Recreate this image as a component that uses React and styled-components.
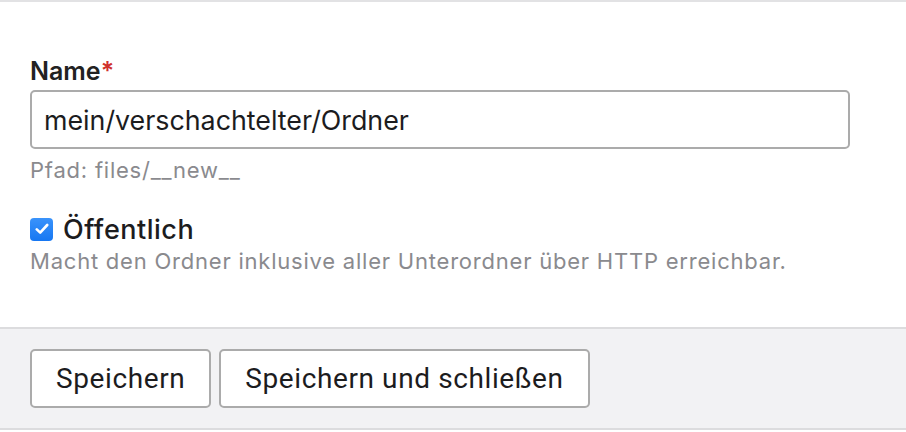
import React, { Component } from 'react';
import styled, { createGlobalStyle } from 'styled-components';

const GlobalStyle = createGlobalStyle`
  html, body {
    margin: 0;
    padding: 0;
    background: #fff;
  }
  body {
    font-family: Inter, "Noto Sans", sans-serif;
    color: #1c1c1e;
  }
`;

class App extends Component {
  state = {
    name: 'mein/verschachtelter/Ordner',
    isPublic: true
  };

  constructor(props) {
    super(props);

    this.handlerInput = this.handlerInput.bind(this);
    this.togglePublic = this.togglePublic.bind(this);
  }

  handlerInput(e) {
    this.setState({ [e.target.name]: e.target.value });
  }

  togglePublic() {
    this.setState({ isPublic: !this.state.isPublic });
  }

  render() {
    const { name, isPublic } = this.state;

    return (
      <FormPanel>
        <Fields>
          <Field>
            <Label htmlFor="name">
              Name<Required>*</Required>
            </Label>
            <TextInput
              id="name"
              type="text"
              name="name"
              value={name}
              onChange={this.handlerInput}
            />
            <Hint $gap={8}>Pfad: files/__new__</Hint>
          </Field>
          <Field>
            <CheckRow>
              <Checkbox checked={isPublic} onClick={this.togglePublic}>
                {isPublic && (
                  <svg width="14" height="12" viewBox="0 0 14 12">
                    <path
                      d="M1.8 6.4 L5.2 9.6 L12.2 2"
                      fill="none"
                      stroke="#fff"
                      strokeWidth="2.6"
                      strokeLinecap="round"
                      strokeLinejoin="round"
                    />
                  </svg>
                )}
              </Checkbox>
              <CheckLabel onClick={this.togglePublic}>Öffentlich</CheckLabel>
            </CheckRow>
            <Hint $gap={2}>
              Macht den Ordner inklusive aller Unterordner über HTTP erreichbar.
            </Hint>
          </Field>
        </Fields>
        <Footer>
          <Button>Speichern</Button>
          <Button>Speichern und schließen</Button>
        </Footer>
      </FormPanel>
    );
  }
}

const FormPanel = styled.div`
  width: 906px;
  border-top: 2px solid #e2e2e4;
`;

const Fields = styled.div`
  display: flex;
  flex-direction: column;
  gap: 29px;
  padding: 53px 56px 53px 30px;
`;

const Field = styled.div`
  display: flex;
  flex-direction: column;
`;

const Label = styled.label`
  font-size: 25px;
  font-weight: 600;
  line-height: 32px;
  margin-bottom: 3px;
  color: #222;
`;

const Required = styled.span`
  color: #d0312d;
`;

const TextInput = styled.input`
  box-sizing: border-box;
  width: 820px;
  height: 59px;
  border: 2px solid #ababab;
  border-radius: 5px;
  padding: 0 12px;
  font-family: Inter, "Noto Sans", sans-serif;
  font-size: 26.8px;
  color: #1c1c1e;
  outline: none;
  background: #fff;
`;

const Hint = styled.div`
  margin-top: ${props => props.$gap}px;
  font-size: 22px;
  line-height: 26px;
  color: #8a8a8e;
  letter-spacing: 0.78px;
`;

const CheckRow = styled.div`
  display: flex;
  align-items: center;
  gap: 10px;
  height: 34px;
`;

const Checkbox = styled.span`
  box-sizing: border-box;
  width: 23px;
  height: 23px;
  border-radius: 4px;
  display: flex;
  align-items: center;
  justify-content: center;
  background: ${props => (props.checked ? 'linear-gradient(#3a93fb, #1677f2)' : '#fff')};
  border: ${props => (props.checked ? 'none' : '2px solid #aaa')};
  cursor: pointer;
`;

const CheckLabel = styled.span`
  font-size: 27px;
  font-weight: 500;
  letter-spacing: 0.5px;
  color: #1c1c1e;
  cursor: pointer;
`;

const Footer = styled.div`
  display: flex;
  gap: 8px;
  padding: 20px 30px;
  background: #f2f2f4;
  border-top: 2px solid #dcdcde;
  border-bottom: 2px solid #dcdcde;
`;

const Button = styled.button`
  box-sizing: border-box;
  height: 59px;
  padding: 0 24px;
  background: #fff;
  border: 2px solid #ababab;
  border-radius: 5px;
  font-family: Roboto, "Liberation Sans", sans-serif;
  font-size: 28px;
  color: #1c1c1e;
  letter-spacing: 0.6px;
  cursor: pointer;
`;

export default function Root() {
  return (
    <>
      <GlobalStyle />
      <App />
    </>
  );
}
